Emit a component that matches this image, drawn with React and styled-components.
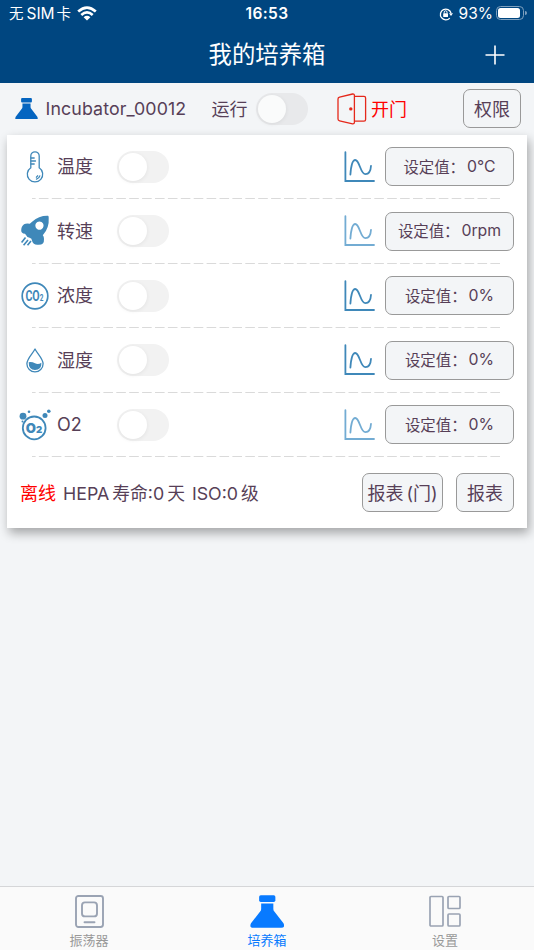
import React, { useState } from "react";
import styled, { createGlobalStyle } from "styled-components";

const BLUE = "#3f88b9";

const FlaskIcon = ({ size, color }) => (
  <svg width={size} height={size * 0.94} viewBox="0 0 34 32" fill={color}>
    <rect x="9" y="0" width="16" height="6.6" rx="1.6" />
    <path d="M11 8.2H23V13.5Q23 15 24 16L33 27.6Q35 32 30.8 32H3.2Q-1 32 1 27.6L10 16Q11 15 11 13.5Z" />
  </svg>
);

const WifiIcon = () => (
  <svg width="20" height="15" viewBox="0 0 20 15" fill="none" stroke="#fff" strokeWidth="2.7">
    <path d="M1.2 5.6Q10-2.2 18.8 5.6" />
    <path d="M4.3 8.9Q10 4 15.7 8.9" />
    <path d="M6.6 11.3Q10 8.4 13.4 11.3L10 14.6Z" fill="#fff" stroke="none" />
  </svg>
);

const LockIcon = () => (
  <svg width="14" height="14" viewBox="0 0 14 14" fill="none" stroke="#fff" strokeWidth="1.3">
    <path d="M10.8 11.1A5.4 5.4 0 1 1 12 6" />
    <path d="M10 6.2H14L12 9Z" fill="#fff" stroke="none" />
    <rect x="4.2" y="6.2" width="4.8" height="3.8" rx=".6" fill="#fff" stroke="none" />
    <path d="M5.2 6.5V5.2a1.4 1.4 0 0 1 2.8 0V6.5" strokeWidth="1" />
  </svg>
);

const DoorIcon = () => (
  <svg width="30" height="32" viewBox="0 0 30 32" fill="none" stroke="#e5281b" strokeWidth="1.3" strokeLinejoin="round">
    <path d="M2.6 4.2L15.6 1Q17.4.8 17.4 2.5V29.3Q17.4 31 15.6 30.8L2.6 27.8Q1 27.4 1 26V6Q1 4.6 2.6 4.2Z" />
    <path d="M17.4 3.3H27Q28.6 3.3 28.6 4.9V26.5Q28.6 28.1 27 28.1H17.4" />
    <circle cx="13.8" cy="15.9" r="1.7" fill="#e5281b" stroke="none" />
  </svg>
);

const ThermometerIcon = () => (
  <svg width="18" height="32" viewBox="0 0 18 32" fill="none" stroke={BLUE} strokeWidth="1.3" strokeLinecap="round">
    <path d="M4.8 16.8V5a4.2 4.2 0 0 1 8.4 0V16.8A7.7 7.7 0 1 1 4.8 16.8Z" />
    <path d="M5 7H8.2M5 10H9.5M5 13H8.2" />
    <path d="M13.8 24.8Q13.1 27.4 10.5 28.2M11.6 24.8L10.4 26.2" />
  </svg>
);

const RocketIcon = () => (
  <svg width="30" height="32" viewBox="0 0 30 32" fill={BLUE}>
    <path
      fillRule="evenodd"
      d="M28 .8Q19 .5 12.4 6.6L9.8 8.8Q4 7.5 1.8 12Q0 17 3.2 18.6Q5.4 18.6 6 20Q7 22.6 9.6 22.8Q12 23.4 12 25.8Q13.2 30 17.6 29.8Q24.4 30.4 24 24Q24 21.4 22.8 20.3Q29.5 13 28.7 2.5Q28.7.8 28 .8ZM19.4 6.5a4.1 4.1 0 1 0 .1 0Z"
    />
    <path d="M5.5 22.5L1.6 27.4M8 25L3.6 30.3M11 26L7.5 30.3" fill="none" stroke={BLUE} strokeWidth="1.6" />
  </svg>
);

const Co2Icon = () => (
  <svg width="28" height="28" viewBox="0 0 28 28" fill={BLUE}>
    <circle cx="14" cy="14" r="12.8" fill="none" stroke={BLUE} strokeWidth="1.7" />
    <text transform="translate(4.4 18.9) scale(.76 1)" fontFamily="Roboto" fontWeight="700" fontSize="14">
      CO<tspan fontSize="8.5">2</tspan>
    </text>
  </svg>
);

const DropIcon = () => (
  <svg width="18" height="25" viewBox="0 0 18 25" fill="none" stroke={BLUE} strokeWidth="1.3">
    <path d="M9 1C7.5 4.6.9 10.5.9 15.8a8.1 8.1 0 0 0 16.2 0C17.1 10.5 10.5 4.6 9 1Z" strokeLinejoin="round" />
    <path d="M2.7 14.2Q6 13.6 9 15.3T15.4 14.8Q15.7 22 9 22.1Q2.6 21.8 2.7 14.2Z" fill={BLUE} stroke="none" />
  </svg>
);

const O2Icon = () => (
  <svg width="32" height="32" viewBox="0 0 32 32" fill={BLUE}>
    <circle cx="15.2" cy="18.9" r="11.4" fill="none" stroke={BLUE} strokeWidth="1.8" />
    <circle cx="4" cy="7.2" r="3.4" />
    <circle cx="10" cy="2.8" r="1.3" />
    <circle cx="26" cy="6.6" r="2.5" />
    <circle cx="29.8" cy="2.3" r="1.8" />
    <circle cx="3.5" cy="12.4" r="1" />
    <text x="6.8" y="23.7" fontFamily="Inter" fontWeight="900" fontSize="13" textLength="16.4" lengthAdjust="spacingAndGlyphs">
      O<tspan fontSize="9.5">2</tspan>
    </text>
  </svg>
);

const CurveIcon = ({ faded }) => (
  <svg width="32" height="32" viewBox="0 0 32 32" fill="none" stroke={faded ? "#73acd3" : BLUE} strokeWidth="1.8" strokeLinecap="round">
    <path d="M1.4 1.2V30H30" />
    <path d="M6.4 23.5C7 15 8.6 9 11.2 9C15.8 9 16.2 23.2 21.5 23.2C24.7 23.2 26.7 20 27 14.8" />
  </svg>
);

const rows = [
  { name: "温度", value: "0°C", icon: <ThermometerIcon /> },
  { name: "转速", value: "0rpm", icon: <RocketIcon />, faded: true },
  { name: "浓度", value: "0%", icon: <Co2Icon /> },
  { name: "湿度", value: "0%", icon: <DropIcon /> },
  { name: "O2", value: "0%", icon: <O2Icon />, faded: true },
];

function Toggle({ dim }) {
  const [on, setOn] = useState(false);
  return (
    <Switch type="button" $on={on} $dim={dim} onClick={() => setOn(!on)}>
      <Knob $dim={dim} />
    </Switch>
  );
}

export default function App() {
  return (
    <Screen>
      <GlobalStyle />
      <Top>
        <StatusBar>
          <Carrier>
            <span>无</span><Latin>SIM</Latin><span>卡</span>
            <WifiIcon />
          </Carrier>
          <Clock>16:53</Clock>
          <Power>
            <LockIcon />
            <span>93%</span>
            <Battery />
          </Power>
        </StatusBar>
        <NavBar>
          <Title>我的培养箱</Title>
          <AddButton aria-label="add">
            <svg width="20" height="20" viewBox="0 0 20 20" stroke="#fff" strokeWidth="1.6">
              <path d="M10 .5V19.5M.5 10H19.5" />
            </svg>
          </AddButton>
        </NavBar>
      </Top>

      <Header>
        <FlaskIcon size={23} color="#0565c0" />
        <DeviceName>Incubator_00012</DeviceName>
        <RunLabel>运行</RunLabel>
        <Toggle dim />
        <Door>
          <DoorIcon />
          <span>开门</span>
        </Door>
        <Button $width={58}>权限</Button>
      </Header>

      <Card>
        {rows.map((row) => (
          <Row key={row.name}>
            <IconCell>{row.icon}</IconCell>
            <RowName>{row.name}</RowName>
            <Toggle />
            <Chart><CurveIcon faded={row.faded} /></Chart>
            <Button $width={129} $small>设定值：<Value>{row.value}</Value></Button>
            <Divider viewBox="0 0 470 2">
              <path d="M0 .5H470" stroke="#dadada" strokeWidth="1" strokeDasharray="9.6 3.3" strokeDashoffset="6" />
            </Divider>
          </Row>
        ))}
        <Footer>
          <Offline>离线</Offline>
          <Life>HEPA<i />寿命:0<i />天</Life>
          <Life>ISO:0<i />级</Life>
          <Reports>
            <Button $width={81}>报表<Paren>(门)</Paren></Button>
            <Button $width={58}>报表</Button>
          </Reports>
        </Footer>
      </Card>

      <TabBar>
        <Tab>
          <svg width="29" height="33" viewBox="0 0 29 33" fill="none" stroke="#9aa3b3" strokeWidth="1.9">
            <rect x="1" y="1" width="27" height="31" rx="2.4" />
            <rect x="7" y="7.4" width="15" height="14" rx="3" />
            <path d="M9.5 27.2H19.5" strokeLinecap="round" />
          </svg>
          振荡器
        </Tab>
        <Tab $active>
          <FlaskIcon size={34.5} color="#087aff" />
          培养箱
        </Tab>
        <Tab>
          <svg width="32" height="33" viewBox="0 0 32 33" fill="none" stroke="#9aa3b3" strokeWidth="1.7">
            <rect x="1" y="1.5" width="13" height="29.5" rx="1" />
            <rect x="19" y="1.5" width="12" height="12" rx="1" />
            <rect x="19" y="19" width="12" height="12" rx="1" />
          </svg>
          设置
        </Tab>
      </TabBar>
    </Screen>
  );
}

const GlobalStyle = createGlobalStyle`
  * { box-sizing: border-box; }
  body {
    margin: 0;
    font-family: Inter, "Noto Sans CJK SC", sans-serif;
    font-weight: 380;
    color: #573f57;
  }
  button { font: inherit; color: inherit; border: 0; padding: 0; margin: 0; background: none; }
  svg { display: block; flex: none; }
`;

const Screen = styled.div`
  width: 534px;
  height: 950px;
  display: flex;
  flex-direction: column;
  background: #f3f5f7;
  overflow: hidden;
  white-space: nowrap;
`;

const Top = styled.div`
  height: 83px;
  background: #004680;
  color: #fff;
`;

const StatusBar = styled.div`
  height: 28px;
  display: grid;
  grid-template-columns: 1fr auto 1fr;
  align-items: center;
  font-size: 15.5px;
  line-height: 28px;
`;

const Carrier = styled.div`
  display: flex;
  align-items: center;
  padding-left: 9px;
  font-size: 14.5px;
  svg { margin: -2px 0 0 6px; }
`;

const Latin = styled.span`
  font-size: 15.5px;
  margin: 0 2px 0 3px;
`;

const Clock = styled.div`
  font-weight: 600;
  letter-spacing: 0.4px;
`;

const Power = styled.div`
  display: flex;
  justify-content: flex-end;
  align-items: center;
  padding-right: 7px;
  svg { margin-top: -1px; }
  span { margin: 0 3px 0 6px; }
`;

const Battery = styled.div`
  width: 28px;
  height: 14px;
  margin: -2px 3px 0 0;
  padding: 1px;
  border: 1px solid #7ea0be;
  border-radius: 4.5px;
  position: relative;
  &::before {
    content: "";
    display: block;
    width: 22px;
    height: 10px;
    border-radius: 2.5px;
    background: #fff;
  }
  &::after {
    content: "";
    position: absolute;
    right: -3.5px;
    top: 4px;
    width: 1.5px;
    height: 4px;
    border-radius: 0 2px 2px 0;
    background: #7ea0be;
  }
`;

const NavBar = styled.div`
  height: 55px;
  display: grid;
  grid-template-columns: 1fr auto 1fr;
  align-items: center;
`;

const Title = styled.div`
  grid-column: 2;
  font-size: 23.4px;
  line-height: 53px;
  padding-bottom: 2px;
`;

const AddButton = styled.button`
  justify-self: end;
  margin: -2px 29px 0 0;
`;

const Header = styled.div`
  height: 52px;
  display: flex;
  align-items: center;
  padding: 0 13px 1px 14.5px;
  font-size: 18px;
`;

const DeviceName = styled.div`
  width: 166px;
  padding-left: 8px;
  font-size: 17.8px;
  letter-spacing: 0.12px;
`;

const RunLabel = styled.div`
  margin: 0 8.5px 0 8px;
  padding-bottom: 2px;
`;

const Door = styled.div`
  display: flex;
  align-items: center;
  gap: 4px;
  margin-left: 29px;
  margin-right: auto;
  color: #ff0000;
  span { padding-bottom: 2px; }
`;

const Switch = styled.button`
  flex: none;
  width: 52px;
  height: 32px;
  padding: 2px;
  border-radius: 16px;
  background: ${(p) => (p.$on ? "#34c759" : p.$dim ? "#e8e9eb" : "#f2f2f2")};
  display: flex;
  align-items: center;
  justify-content: ${(p) => (p.$on ? "flex-end" : "flex-start")};
`;

const Knob = styled.span`
  width: 28px;
  height: 28px;
  border-radius: 50%;
  background: ${(p) => (p.$dim ? "#fafbfb" : "#fff")};
  box-shadow: 0 1px 4px rgba(0, 0, 0, 0.07);
`;

const Button = styled.button`
  flex: none;
  width: ${(p) => p.$width}px;
  height: 39px;
  padding-bottom: 2px;
  display: flex;
  align-items: center;
  justify-content: center;
  border: 1.5px solid #999;
  border-radius: 7px;
  background: #f3f5f7;
  font-size: ${(p) => (p.$small ? 15.4 : 18)}px;
`;

const Value = styled.span`
  margin-left: 2px;
  padding-top: 1px;
  font-size: 15.8px;
`;

const Card = styled.div`
  height: 393px;
  margin: 0 7px;
  padding: 0 13px;
  background: #fff;
  box-shadow: 2px 5px 10px rgba(0, 0, 0, 0.33);
`;

const Row = styled.div`
  height: 64.5px;
  display: flex;
  flex-wrap: wrap;
  align-items: center;
  align-content: flex-start;
  padding-top: 12px;
`;

const IconCell = styled.div`
  width: 30px;
  height: 39px;
  display: flex;
  align-items: center;
  justify-content: center;
`;

const RowName = styled.div`
  width: 60px;
  margin-left: 7px;
  padding-top: 1px;
  font-size: 18px;
  line-height: 38px;
`;

const Chart = styled.div`
  margin: 0 9px 0 auto;
`;

const Divider = styled.svg`
  width: 470px;
  height: 2px;
  margin: 12px 0 0 12px;
`;

const Footer = styled.div`
  height: 70px;
  display: flex;
  align-items: center;
  font-size: 18px;
  i { display: inline-block; width: 3px; }
`;

const Offline = styled.div`
  padding-bottom: 2px;
  color: #ff0000;
`;

const Life = styled.div`
  margin-left: 7px;
  padding-bottom: 2px;
  font-size: 17.8px;
`;

const Reports = styled.div`
  display: flex;
  gap: 13px;
  margin-left: auto;
`;

const Paren = styled.span`
  margin-left: 3px;
`;

const TabBar = styled.div`
  height: 64px;
  margin-top: auto;
  display: grid;
  grid-template-columns: repeat(3, 1fr);
  background: #fafafa;
  border-top: 1px solid #d5d6d8;
`;

const Tab = styled.div`
  display: flex;
  flex-direction: column;
  align-items: center;
  padding-top: 8px;
  font-size: 13px;
  font-weight: 400;
  line-height: 24px;
  color: ${(p) => (p.$active ? "#087aff" : "#999")};
  svg { height: 33px; }
`;
